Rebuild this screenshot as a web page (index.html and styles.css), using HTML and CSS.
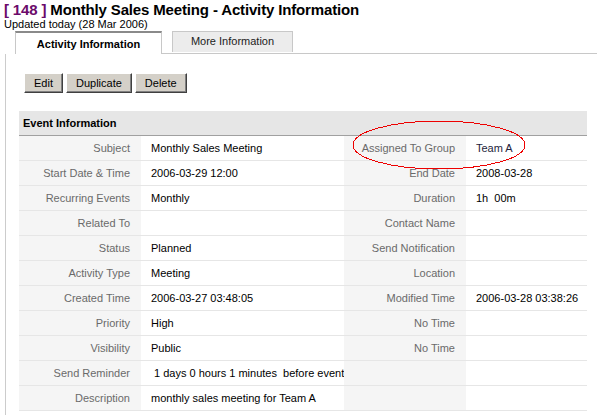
FILE: index.html
```html
<!DOCTYPE html>
<html>
<head>
<meta charset="utf-8">
<link rel="stylesheet" href="styles.css">
</head>
<body>
<div class="head">
  <h1 class="title"><span class="rec-id">[ 148 ]</span> Monthly Sales Meeting - Activity Information</h1>
  <div class="updated">Updated today (28 Mar 2006)</div>
</div>
<div class="tabs">
  <div class="tab-spacer"></div>
  <div class="tab tab-active">Activity Information</div>
  <div class="tab-gap"></div>
  <div class="tab-cell"><div class="tab tab-inactive">More Information</div></div>
  <div class="tab-fill"></div>
</div>
<div class="content">
  <div class="buttons">
    <button class="btn">Edit</button>
    <button class="btn">Duplicate</button>
    <button class="btn">Delete</button>
  </div>
  <div class="block">
    <div class="block-head">Event Information</div>
    <div class="grid">
      <div class="lbl">Subject</div><div class="val">Monthly Sales Meeting</div><div class="lbl">Assigned To Group</div><div class="val val-team">Team A</div>
      <div class="lbl">Start Date &amp; Time</div><div class="val">2006-03-29 12:00</div><div class="lbl">End Date</div><div class="val">2008-03-28</div>
      <div class="lbl">Recurring Events</div><div class="val">Monthly</div><div class="lbl">Duration</div><div class="val">1h&nbsp; 00m</div>
      <div class="lbl">Related To</div><div class="val"></div><div class="lbl">Contact Name</div><div class="val"></div>
      <div class="lbl">Status</div><div class="val">Planned</div><div class="lbl">Send Notification</div><div class="val"></div>
      <div class="lbl">Activity Type</div><div class="val">Meeting</div><div class="lbl">Location</div><div class="val"></div>
      <div class="lbl">Created Time</div><div class="val">2006-03-27 03:48:05</div><div class="lbl">Modified Time</div><div class="val">2006-03-28 03:38:26</div>
      <div class="lbl">Priority</div><div class="val">High</div><div class="lbl">No Time</div><div class="val"></div>
      <div class="lbl">Visibility</div><div class="val">Public</div><div class="lbl">No Time</div><div class="val"></div>
      <div class="lbl">Send Reminder</div><div class="val">&nbsp;1 days 0 hours 1 minutes&nbsp; before event</div><div class="lbl"></div><div class="val"></div>
      <div class="lbl">Description</div><div class="val">monthly sales meeting for Team A</div><div class="lbl"></div><div class="val"></div>
    </div>
    <svg class="circle" width="176" height="52" viewBox="0 0 176 52">
      <ellipse cx="87" cy="25" rx="86" ry="24" fill="none" stroke="#ee0000" stroke-width="1" shape-rendering="crispEdges"/>
    </svg>
  </div>
</div>
</body>
</html>
```
FILE: styles.css
```css
html, body {
  margin: 0;
  padding: 0;
  background: #fff;
}
body {
  font-family: "Liberation Sans", Arial, sans-serif;
  font-size: 11px;
  color: #000;
  width: 599px;
  height: 415px;
  overflow: hidden;
}
.head {
  padding-left: 4px;
}
.title {
  margin: 0;
  padding-top: 1px;
  font-size: 15px;
  line-height: 18px;
  font-weight: bold;
  letter-spacing: -0.15px;
  color: #000;
}
.rec-id {
  color: #6b0a6b;
}
.updated {
  font-size: 11px;
  line-height: 11px;
}
.tabs {
  display: flex;
  margin: 1px 2px 0 5px;
  height: 23px;
}
.tab-spacer {
  width: 10px;
}
.tab {
  box-sizing: border-box;
  text-align: center;
}
.tab-active {
  width: 147px;
  height: 23px;
  border-top: 2px solid #8a8a8a;
  border-left: 1px solid #c8c8c8;
  border-right: 1px solid #c8c8c8;
  font-weight: bold;
  line-height: 21px;
  padding-top: 1px;
}
.tab-gap {
  width: 10px;
  border-bottom: 1px solid #c8c8c8;
}
.tab-cell {
  width: 121px;
  border-bottom: 1px solid #c8c8c8;
}
.tab-inactive {
  height: 21px;
  background: #ececec;
  border: 1px solid #c8c8c8;
  border-bottom: none;
  line-height: 19px;
  color: #222;
}
.tab-fill {
  flex: 1;
  border-bottom: 1px solid #c8c8c8;
}
.content {
  box-sizing: border-box;
  margin-left: 5px;
  border-left: 1px solid #cccccc;
  padding: 19px 10px 0 13px;
  height: 361px;
}
.buttons {
  display: flex;
  gap: 3px;
  margin-left: 5px;
}
.btn {
  box-sizing: border-box;
  height: 20px;
  padding: 0 9px;
  font-family: "Liberation Sans", Arial, sans-serif;
  font-size: 11px;
  color: #000;
  background: #d4d0c8;
  border: 1px solid;
  border-color: #ffffff #404040 #404040 #ffffff;
  box-shadow: inset -1px -1px 0 #808080;
  border-radius: 0;
}
.block {
  position: relative;
  margin-top: 18px;
  width: 568px;
}
.block-head {
  height: 24px;
  line-height: 24px;
  background: #e6e6e6;
  border-bottom: 1px solid #a0a0a0;
  font-weight: bold;
  padding-left: 4px;
}
.grid {
  display: grid;
  grid-template-columns: 122px 203px 122px 121px;
  grid-auto-rows: 25px;
}
.lbl, .val {
  box-sizing: border-box;
  border-bottom: 1px solid #e6e6e6;
  line-height: 24px;
  white-space: nowrap;
}
.lbl {
  background: #f5f5f5;
  color: #6a6a6a;
  text-align: right;
  padding-right: 11px;
}
.val {
  padding-left: 10px;
}
.val-team {
  color: #1e1e3c;
}
.circle {
  position: absolute;
  left: 333px;
  top: 9px;
}
```
